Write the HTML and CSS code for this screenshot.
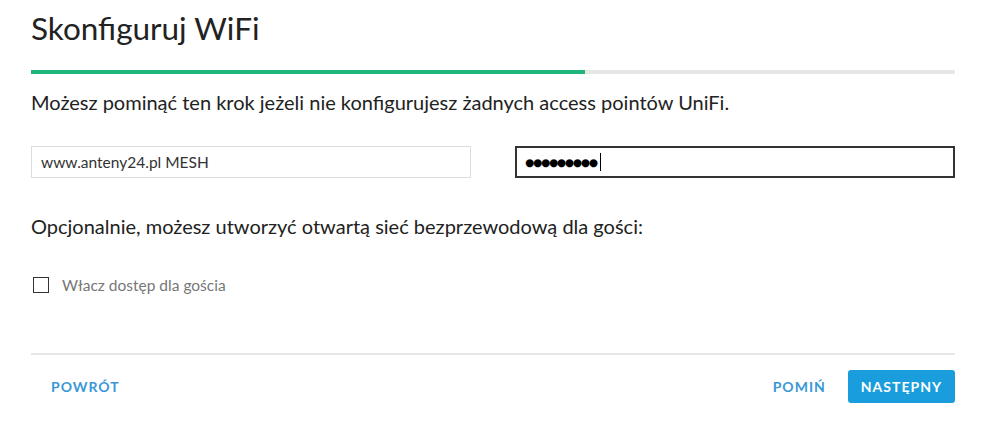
FILE: index.html
```html
<!DOCTYPE html>
<html lang="pl">
<head>
<meta charset="utf-8">
<link rel="stylesheet" href="styles.css">
</head>
<body>
<div class="wizard">
  <h1 class="title">Skonfiguruj WiFi</h1>
  <div class="progress"><div class="progress-fill" style="width:60%"></div></div>
  <p class="lead">Możesz pominąć ten krok jeżeli nie konfigurujesz żadnych access pointów UniFi.</p>
  <div class="fields">
    <div class="field">www.anteny24.pl MESH</div>
    <div class="field field-active"><span class="dots">●●●●●●●●●</span><span class="caret"></span></div>
  </div>
  <p class="lead lead-2">Opcjonalnie, możesz utworzyć otwartą sieć bezprzewodową dla gości:</p>
  <label class="check"><span class="box"></span><span class="check-label">Włacz dostęp dla gościa</span></label>
  <div class="footer">
    <span class="link">POWRÓT</span>
    <div class="actions">
      <span class="link">POMIŃ</span>
      <span class="btn">NASTĘPNY</span>
    </div>
  </div>
</div>
</body>
</html>
```
FILE: styles.css
```css
* { box-sizing: border-box; }
html, body { margin: 0; padding: 0; background: #fff; }
body { font-family: Lato, "Open Sans", sans-serif; color: #222; }
.wizard { width: 924px; margin-left: 31px; padding-top: 9px; }
.title { margin: 0; font-size: 31.5px; font-weight: 400; line-height: 38px; color: #222; }
.progress { margin-top: 23px; height: 4px; background: #e6e6e6; }
.progress-fill { height: 4px; background: #1fb57a; }
.lead { margin: 15px 0 0; font-size: 20px; line-height: 26px; color: #222; }
.fields { display: flex; justify-content: space-between; margin-top: 31px; }
.field { width: 440px; height: 32px; border: 1px solid #ddd; padding: 0 9px; font-size: 15.5px; line-height: 30px; color: #333; display: flex; align-items: center; }
.field-active { border: 2px solid #333; padding: 0 8px; }
.dots { font-family: "DejaVu Sans", sans-serif; font-size: 10.5px; letter-spacing: -1.2px; color: #000; }
.caret { width: 1.5px; height: 18px; background: #000; margin-left: 3px; }
.lead-2 { margin-top: 35px; }
.check { display: flex; align-items: center; margin-top: 37px; margin-left: 2px; }
.box { width: 16px; height: 16px; border: 1.5px solid #333; background: #fff; }
.check-label { margin-left: 13px; font-size: 15.5px; color: #777; }
.footer { margin-top: 59px; border-top: 2px solid #e6e6e6; display: flex; justify-content: space-between; align-items: center; padding-top: 15px; }
.link { font-size: 14px; font-weight: 700; letter-spacing: 1px; color: #3a98d6; padding: 0 20px; }
.actions { display: flex; align-items: center; }
.actions .link { padding-right: 22px; }
.btn { background: #1a9ddc; color: #fff; font-size: 14px; font-weight: 700; letter-spacing: 1px; height: 33px; line-height: 33px; padding: 0 13px; border-radius: 3px; }
```
